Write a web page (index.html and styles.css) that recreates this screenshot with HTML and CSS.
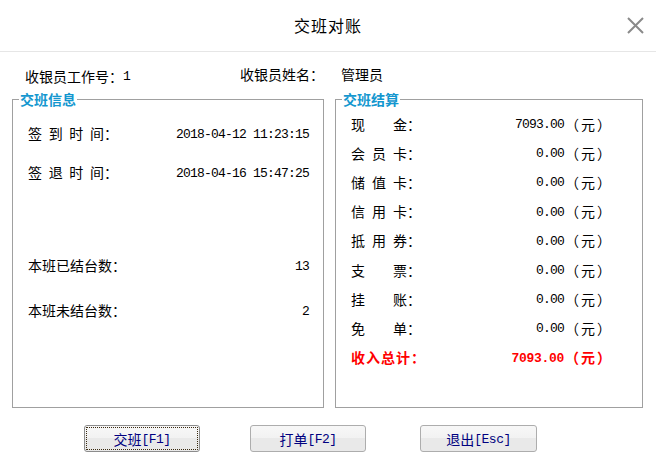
FILE: index.html
```html
<!DOCTYPE html>
<html lang="zh-CN">
<head>
<meta charset="utf-8">
<title>交班对账</title>
<link rel="stylesheet" href="styles.css">
</head>
<body>
<div class="dialog">
  <header class="header">
    <span></span>
    <h1 class="title">交班对账</h1>
    <span class="close" aria-label="关闭">
      <svg width="17" height="17" viewBox="0 0 17 17"><path d="M1 1L16 16M16 1L1 16" stroke="#8a8a8a" stroke-width="2" fill="none"/></svg>
    </span>
  </header>

  <div class="info">
    <div class="info-id">收银员工作号：<span class="mono">1</span></div>
    <div class="info-name-label">收银员姓名：</div>
    <div class="info-name">管理员</div>
  </div>

  <div class="panels">
    <fieldset class="group group-left">
      <legend>交班信息</legend>
      <div class="left-body">
        <div class="lrow"><span class="jl jl4">签到时间</span><span class="colon">：</span><span class="val mono">2018-04-12 11:23:15</span></div>
        <div class="lrow lrow-2"><span class="jl jl4">签退时间</span><span class="colon">：</span><span class="val mono">2018-04-16 15:47:25</span></div>
        <div class="lrow lrow-3"><span>本班已结台数</span><span class="colon">：</span><span class="val mono">13</span></div>
        <div class="lrow lrow-4"><span>本班未结台数</span><span class="colon">：</span><span class="val mono">2</span></div>
      </div>
    </fieldset>

    <fieldset class="group group-right">
      <legend>交班结算</legend>
      <div class="right-body">
        <div class="rrow"><span class="jl jl3">现金</span><span class="colon">：</span><span class="num mono">7093.00</span><span class="unit">（元）</span></div>
        <div class="rrow"><span class="jl jl3">会员卡</span><span class="colon">：</span><span class="num mono">0.00</span><span class="unit">（元）</span></div>
        <div class="rrow"><span class="jl jl3">储值卡</span><span class="colon">：</span><span class="num mono">0.00</span><span class="unit">（元）</span></div>
        <div class="rrow"><span class="jl jl3">信用卡</span><span class="colon">：</span><span class="num mono">0.00</span><span class="unit">（元）</span></div>
        <div class="rrow"><span class="jl jl3">抵用券</span><span class="colon">：</span><span class="num mono">0.00</span><span class="unit">（元）</span></div>
        <div class="rrow"><span class="jl jl3">支票</span><span class="colon">：</span><span class="num mono">0.00</span><span class="unit">（元）</span></div>
        <div class="rrow"><span class="jl jl3">挂账</span><span class="colon">：</span><span class="num mono">0.00</span><span class="unit">（元）</span></div>
        <div class="rrow"><span class="jl jl3">免单</span><span class="colon">：</span><span class="num mono">0.00</span><span class="unit">（元）</span></div>
        <div class="rrow total"><span class="total-label">收入总计</span><span class="colon">：</span><span class="num mono">7093.00</span><span class="unit">（元）</span></div>
      </div>
    </fieldset>
  </div>

  <div class="buttons">
    <button class="btn btn-focus">交班<span class="key">[F1]</span></button>
    <button class="btn">打单<span class="key">[F2]</span></button>
    <button class="btn btn-exit">退出<span class="key">[Esc]</span></button>
  </div>
</div>
</body>
</html>
```

FILE: styles.css
```css
html, body {
  margin: 0;
  padding: 0;
  background: #ffffff;
}

body {
  width: 656px;
  height: 465px;
  overflow: hidden;
  font-family: "Noto Sans CJK SC", "Noto Sans", sans-serif;
  font-size: 14px;
  line-height: 18px;
  color: #000;
}

.dialog {
  width: 656px;
  height: 465px;
  display: flex;
  flex-direction: column;
}

.header {
  height: 51px;
  border-bottom: 1px solid #e6e6e6;
  display: grid;
  grid-template-columns: 1fr auto 1fr;
  align-items: center;
  box-sizing: content-box;
}

.title {
  margin: 0;
  font-size: 16px;
  font-weight: normal;
  letter-spacing: 1px;
  line-height: 20px;
  padding-bottom: 2px;
}

.close {
  justify-self: end;
  margin-right: 12px;
  width: 17px;
  height: 17px;
  margin-bottom: 1px;
}

.close svg {
  display: block;
}

.mono {
  font-family: "Liberation Mono", "DejaVu Sans Mono", monospace;
  font-size: 13px;
  letter-spacing: -0.8px;
  padding-top: 3px;
}

.info {
  display: grid;
  grid-template-columns: 215px 101px auto;
  padding: 13px 0 7px 25px;
  height: 18px;
}

.info-id {
  display: flex;
  align-items: center;
}

.panels {
  display: flex;
  padding-left: 12px;
  column-gap: 11px;
  height: 318px;
}

.group {
  margin: 0;
  padding: 0;
  border: 1px solid #a0a0a0;
  min-width: 0;
  box-sizing: border-box;
  height: 318px;
}

.group legend {
  margin-left: 6px;
  padding: 0 1px;
  font-weight: bold;
  color: #1497cf;
  line-height: 18px;
}

.group-left {
  width: 312px;
}

.group-right {
  width: 308px;
}

.jl {
  display: inline-block;
  text-align: justify;
  text-align-last: justify;
}

.jl4 {
  width: 76px;
}

.jl3 {
  width: 56px;
}

.left-body {
  padding: 16px 14px 0 15px;
}

.lrow {
  display: flex;
  align-items: center;
  height: 18px;
}

.lrow .val {
  margin-left: auto;
}

.lrow-2 {
  margin-top: 21px;
}

.lrow-3 {
  margin-top: 75px;
}

.lrow-4 {
  margin-top: 27px;
}

.right-body {
  padding: 1px 36px 0 15px;
}

.rrow {
  display: flex;
  align-items: center;
  height: 29.2px;
}

.rrow .num {
  margin-left: auto;
}

.unit {
  width: 42px;
  letter-spacing: 2px;
  padding-left: 1px;
  box-sizing: border-box;
}

.total {
  color: #ff0000;
  font-weight: bold;
}

.total .mono {
  font-weight: bold;
  letter-spacing: -0.3px;
}

.total-label {
  letter-spacing: 1px;
}

.buttons {
  display: flex;
  column-gap: 50px;
  padding: 17px 0 0 84px;
}

.btn {
  width: 116px;
  height: 27px;
  padding: 0;
  border: 1px solid #adadad;
  border-radius: 3px;
  background: linear-gradient(#f7f7f7 0, #f2f2f2 50%, #e9e9e9 50%, #e9e9e9 100%);
  color: #000080;
  font-family: "Noto Sans CJK SC", sans-serif;
  font-size: 14px;
  line-height: 18px;
  display: flex;
  align-items: center;
  justify-content: center;
}

.key {
  font-family: "Liberation Mono", monospace;
  font-size: 13px;
  letter-spacing: -0.5px;
  padding-top: 2px;
}

.btn-focus {
  border-color: #8c8c8c;
  outline: 1px dotted #3a2a10;
  outline-offset: -3px;
}

.btn-exit {
  width: 117px;
  margin-left: 4px;
}
```
